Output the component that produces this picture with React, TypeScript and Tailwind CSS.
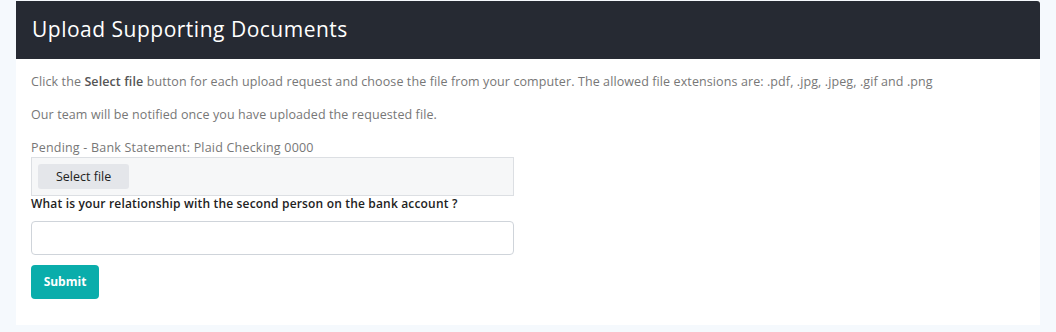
import React from "react";

const App = () => {
  return (
    <div className="min-h-[332px] bg-[#f5f9fd] px-4 pt-px font-['Open_Sans',sans-serif]">
      <div className="bg-white pb-[26px]">
        <div className="flex h-[58px] items-center rounded-tr-[3px] bg-[#262a33] px-4">
          <h1 className="text-[21px] tracking-[0.5px] text-white">Upload Supporting Documents</h1>
        </div>
        <div className="px-[15px] pt-[14px] text-[12.5px] tracking-[0.1px] text-[#777]">
          <p className="leading-[18px]">
            Click the <b className="font-semibold text-[#555]">Select file</b> button for each upload request and choose
            the file from your computer. The allowed file extensions are: .pdf, .jpg, .jpeg, .gif and .png
          </p>
          <p className="mt-[15px] leading-[18px]">Our team will be notified once you have uploaded the requested file.</p>
          <p className="mt-[15px] leading-[18px] tracking-[0.2px]">Pending - Bank Statement: Plaid Checking 0000</p>
          <div className="w-[483px] border border-[#dcdfe3] bg-[#f6f7f8] px-[6px] py-[6px]">
            <button className="h-[25px] rounded-[3px] bg-[#e4e6ea] px-[18px] pt-[2px] text-[12.5px] tracking-normal text-[#222]">
              Select file
            </button>
          </div>
          <label className="block text-[12px] font-semibold leading-[16px] tracking-[0.17px] text-[#222]">
            What is your relationship with the second person on the bank account ?
          </label>
          <input className="mt-[9px] block h-[34px] w-[483px] rounded-[4px] border border-[#cfd4da] bg-white" />
          <button className="mt-[10px] h-[34px] w-[68px] rounded-[4px] bg-[#0aadab] text-[12px] font-bold tracking-normal text-white">
            Submit
          </button>
        </div>
      </div>
    </div>
  );
};

export default App;
